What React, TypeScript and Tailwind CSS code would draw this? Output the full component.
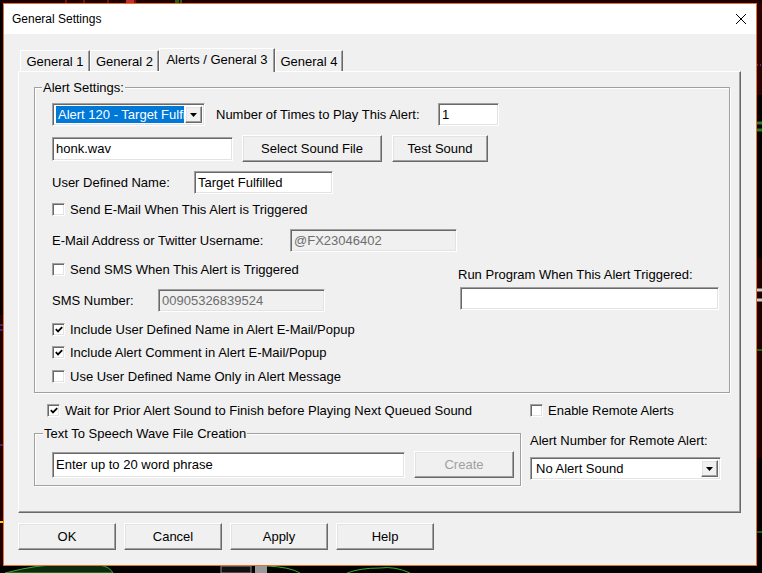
import React from "react";

const sunken =
  "border border-t-[#a0a0a0] border-l-[#a0a0a0] border-r-white border-b-white shadow-[inset_1px_1px_0_#696969,inset_-1px_-1px_0_#e3e3e3]";
const raised =
  "border border-t-white border-l-white border-r-[#696969] border-b-[#696969] shadow-[inset_-1px_-1px_0_#a0a0a0,inset_1px_1px_0_#e3e3e3]";
const etched =
  "relative border border-[#a0a0a0] shadow-[inset_1px_1px_0_#fff,1px_1px_0_#fff]";

function Field({ value = "", disabled = false, className = "" }: { value?: string; disabled?: boolean; className?: string }) {
  return (
    <div
      className={`${sunken} ${disabled ? "bg-[#f0f0f0] text-[#6d6d6d]" : "bg-white text-black"} flex items-center pl-[3px] whitespace-nowrap overflow-hidden ${className}`}
    >
      {value}
    </div>
  );
}

function Button({ label, disabled = false, className = "" }: { label: string; disabled?: boolean; className?: string }) {
  return (
    <button
      className={`${raised} bg-[#f0f0f0] flex items-center justify-center ${disabled ? "text-[#a0a0a0]" : "text-black"} ${className}`}
    >
      {label}
    </button>
  );
}

function Arrow() {
  return (
    <span className={`${raised} bg-[#f0f0f0] w-[17px] h-full flex items-center justify-center shrink-0`}>
      <svg width="7" height="4" viewBox="0 0 7 4">
        <path d="M0 0h7L3.5 4z" fill="black" />
      </svg>
    </span>
  );
}

function Combo({ text, selected = false, className = "" }: { text: string; selected?: boolean; className?: string }) {
  return (
    <div className={`${sunken} bg-white flex h-[23px] p-[2px] ${className}`}>
      <span
        className={`flex-1 min-w-0 overflow-hidden whitespace-nowrap flex items-center ml-[1px] mr-[1px] pl-[2px] ${selected ? "bg-[#0078d7] text-white" : "text-black"}`}
      >
        {text}
      </span>
      <Arrow />
    </div>
  );
}

function Check({ label, checked = false, className = "" }: { label: string; checked?: boolean; className?: string }) {
  return (
    <div className={`flex items-center h-[16px] ${className}`}>
      <span className={`${sunken} bg-white w-[13px] h-[13px] flex items-center justify-center shrink-0`}>
        {checked && (
          <svg width="8" height="7" viewBox="0 0 8 7">
            <path d="M0.8 3.2 L3 5.4 L7.2 1.2" stroke="black" strokeWidth="1.8" fill="none" />
          </svg>
        )}
      </span>
      <span className="ml-[5px] whitespace-nowrap">{label}</span>
    </div>
  );
}

function Tab({ label, active = false, className = "" }: { label: string; active?: boolean; className?: string }) {
  return active ? (
    <div
      className={`relative z-10 h-[24px] bg-[#f0f0f0] border-t border-l border-r border-t-white border-l-white border-r-[#696969] shadow-[inset_-1px_0_0_#a0a0a0] flex items-start justify-center pt-[3px] ${className}`}
    >
      {label}
    </div>
  ) : (
    <div
      className={`h-[21px] mb-[1px] bg-[#f0f0f0] border-t border-l border-r border-t-white border-l-white border-r-[#696969] shadow-[inset_-1px_0_0_#a0a0a0] flex items-center justify-center pt-[1px] ${className}`}
    >
      {label}
    </div>
  );
}

// bits of the trading chart that peek out around the dialog
function ChartBackdrop() {
  return (
    <svg className="absolute inset-0" width="762" height="573" viewBox="0 0 762 573">
      <rect width="762" height="573" fill="#050000" />
      <rect x="740" y="0" width="22" height="95" fill="#2a0202" />
      <rect x="740" y="258" width="22" height="200" fill="#1e0202" />
      <rect x="0" y="315" width="6" height="250" fill="#1e0202" />
      <rect x="0" y="0" width="762" height="3" fill="#1a0000" />
      <path d="M66 0v3M84 0v3M108 0v3M128 0v3M135 0v3" stroke="#d02020" />
      <rect x="126" y="0" width="8" height="3" fill="#c03030" />
      <path d="M176 0v3M178 0v3M181 0v3" stroke="#30c030" />
      <path d="M5 573 Q40 564 60 565 L100 565 Q110 567 113 573Z" fill="#0c2a0c" stroke="#30b030" />
      <path d="M267 566 Q290 567 300 573" fill="none" stroke="#30b030" />
      <path d="M347 573 Q360 568 380 568 Q395 566 410 573" fill="none" stroke="#30b030" />
      <rect x="221" y="566" width="30" height="7" fill="#111" stroke="#888" />
      <rect x="255" y="566" width="12" height="7" fill="#999" />
      <path d="M757 65h5" stroke="#7070ff" strokeDasharray="1 2" />
      <path d="M757 123h5M757 130h5" stroke="#2a7a2a" strokeWidth="3" />
      <path d="M757 350h5M757 532h5" stroke="#20c020" />
      <path d="M757 290h5M757 300h5" stroke="#ccc" strokeWidth="3" />
      <path d="M0 325h3M0 330h3M0 445h3" stroke="#6040ff" />
      <path d="M0 522h3" stroke="#ffd000" strokeWidth="2" />
    </svg>
  );
}

export default function App() {
  return (
    <div className="relative w-[762px] h-[573px] bg-black overflow-hidden font-['Liberation_Sans',Arial,sans-serif] text-[13px] leading-[15px] text-black">
      <ChartBackdrop />
      <div className="relative pt-[3px] pl-[3px]">
        <div className="w-[754px] h-[563px] border border-[#e8702a] flex flex-col">
          {/* title bar */}
          <div className="h-[30px] bg-white flex items-center justify-between pl-[8px] pr-[10px] shrink-0">
            <span className="text-[12px]">General Settings</span>
            <svg width="10" height="10" viewBox="0 0 10 10">
              <path d="M0 0L10 10M10 0L0 10" stroke="black" strokeWidth="1" />
            </svg>
          </div>

          <div className="flex-1 bg-[#f0f0f0] pl-[14px] pt-[14px]">
            {/* tabs */}
            <div className="flex items-end ml-[2px] h-[24px] -mb-[1px]">
              <Tab label="General 1" className="w-[70px]" />
              <Tab label="General 2" className="w-[69px]" />
              <Tab label="Alerts / General 3" active className="w-[116px]" />
              <Tab label="General 4" className="w-[68px]" />
            </div>

            {/* tab page */}
            <div className="w-[723px] h-[442px] border border-t-white border-l-white border-r-[#696969] border-b-[#696969] shadow-[inset_-1px_-1px_0_#a0a0a0] pl-[15px] pt-[15px]">
              {/* Alert Settings group */}
              <div className={`${etched} w-[696px] h-[306px] pl-[17px] pt-[15px]`}>
                <span className="absolute left-[7px] -top-[8px] px-[1px] bg-[#f0f0f0]">Alert Settings:</span>

                <div className="flex items-center h-[23px]">
                  <Combo text="Alert 120 - Target Fulfilled" selected className="w-[153px]" />
                  <span className="ml-[11px] w-[222px]">Number of Times to Play This Alert:</span>
                  <Field value="1" className="w-[61px] h-[23px]" />
                </div>

                <div className="flex items-center h-[27px] mt-[9px]">
                  <Field value="honk.wav" className="w-[181px] h-[24px]" />
                  <Button label="Select Sound File" className="ml-[9px] w-[140px] h-[27px]" />
                  <Button label="Test Sound" className="ml-[10px] w-[96px] h-[27px]" />
                </div>

                <div className="flex items-center h-[23px] mt-[9px]">
                  <span className="w-[142px]">User Defined Name:</span>
                  <Field value="Target Fulfilled" className="w-[139px] h-[23px]" />
                </div>

                <Check label="Send E-Mail When This Alert is Triggered" className="mt-[7px]" />

                <div className="flex items-center h-[23px] mt-[12px]">
                  <span className="w-[238px]">E-Mail Address or Twitter Username:</span>
                  <Field value="@FX23046402" disabled className="w-[167px] h-[23px]" />
                </div>

                <div className="flex mt-[9px]">
                  <div className="w-[406px]">
                    <Check label="Send SMS When This Alert is Triggered" />
                    <div className="flex items-center h-[23px] mt-[12px]">
                      <span className="w-[106px]">SMS Number:</span>
                      <Field value="00905326839524" disabled className="w-[167px] h-[23px]" />
                    </div>
                  </div>
                  <div className="pt-[6px]">
                    <div>Run Program When This Alert Triggered:</div>
                    <Field className="ml-[2px] mt-[5px] w-[259px] h-[23px]" />
                  </div>
                </div>

                <Check label="Include User Defined Name in Alert E-Mail/Popup" checked className="mt-[9px]" />
                <Check label="Include Alert Comment in Alert E-Mail/Popup" checked className="mt-[7px]" />
                <Check label="Use User Defined Name Only in Alert Message" className="mt-[8px]" />
              </div>

              <div className="flex mt-[9px]">
                <div className="w-[487px]">
                  <Check
                    label="Wait for Prior Alert Sound to Finish before Playing Next Queued Sound"
                    checked
                    className="ml-[13px]"
                  />
                  <div className={`${etched} mt-[15px] w-[487px] h-[53px] pl-[17px] pt-[17px]`}>
                    <span className="absolute left-[8px] -top-[8px] px-[1px] bg-[#f0f0f0]">
                      Text To Speech Wave File Creation
                    </span>
                    <div className="flex items-center h-[27px]">
                      <Field value="Enter up to 20 word phrase" className="w-[353px] h-[26px]" />
                      <Button label="Create" disabled className="ml-[9px] w-[100px] h-[27px]" />
                    </div>
                  </div>
                </div>
                <div className="ml-[9px]">
                  <Check label="Enable Remote Alerts" />
                  <div className="mt-[15px]">Alert Number for Remote Alert:</div>
                  <Combo text="No Alert Sound" className="mt-[9px] w-[191px]" />
                </div>
              </div>
            </div>

            {/* dialog buttons */}
            <div className="flex gap-[8px] mt-[10px]">
              <Button label="OK" className="w-[98px] h-[27px]" />
              <Button label="Cancel" className="w-[98px] h-[27px]" />
              <Button label="Apply" className="w-[98px] h-[27px]" />
              <Button label="Help" className="w-[98px] h-[27px]" />
            </div>
          </div>
        </div>
      </div>
    </div>
  );
}
